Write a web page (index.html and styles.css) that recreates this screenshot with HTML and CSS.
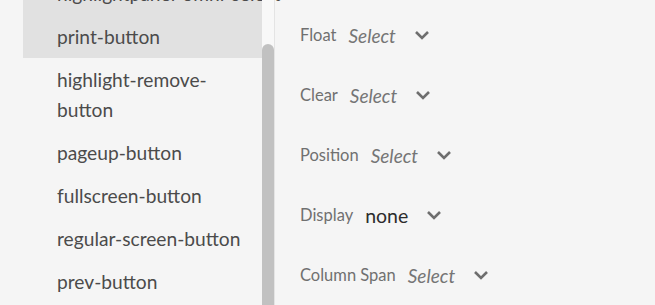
FILE: index.html
```html
<!DOCTYPE html>
<html lang="en">

<head>
    <meta charset="UTF-8">
    <meta name="viewport" content="width=device-width, initial-scale=1.0">
    <title>Component Styles</title>
    <link rel="stylesheet" href="styles.css">
</head>

<body>
    <div class="layout">
        <div class="sidebar">
            <ul class="item-list">
                <li class="item active">highlightpanel-omni-select</li>
                <li class="item active">print-button</li>
                <li class="item">highlight-remove-<br>button</li>
                <li class="item">pageup-button</li>
                <li class="item">fullscreen-button</li>
                <li class="item">regular-screen-button</li>
                <li class="item">prev-button</li>
            </ul>
            <div class="scrollbar">
                <div class="thumb"></div>
            </div>
        </div>

        <div class="props">
            <div class="prop">
                <span class="label">Float</span>
                <span class="value empty">Select</span>
                <svg class="chevron" viewBox="0 0 16 10"><path d="M2 2 L8 8 L14 2" /></svg>
            </div>
            <div class="prop">
                <span class="label">Clear</span>
                <span class="value empty">Select</span>
                <svg class="chevron" viewBox="0 0 16 10"><path d="M2 2 L8 8 L14 2" /></svg>
            </div>
            <div class="prop">
                <span class="label">Position</span>
                <span class="value empty">Select</span>
                <svg class="chevron" viewBox="0 0 16 10"><path d="M2 2 L8 8 L14 2" /></svg>
            </div>
            <div class="prop">
                <span class="label">Display</span>
                <span class="value">none</span>
                <svg class="chevron" viewBox="0 0 16 10"><path d="M2 2 L8 8 L14 2" /></svg>
            </div>
            <div class="prop">
                <span class="label">Column Span</span>
                <span class="value empty">Select</span>
                <svg class="chevron" viewBox="0 0 16 10"><path d="M2 2 L8 8 L14 2" /></svg>
            </div>
        </div>
    </div>
</body>

</html>
```

FILE: styles.css
```css
body {
    font-family: Lato, "Open Sans", sans-serif;
    background-color: #f5f5f5;
    margin: 0;
    height: 305px;
    overflow: hidden;
}

.layout {
    display: flex;
    height: 305px;
    overflow: hidden;
}

.sidebar {
    display: flex;
    flex-shrink: 0;
    width: 275px;
    padding-left: 23px;
    box-sizing: border-box;
    border-right: 1px solid #e4e4e4;
}

.item-list {
    list-style: none;
    margin: -28px 0 0 0;
    padding: 0;
    width: 239px;
}

.item {
    padding: 7px 0 6px 34px;
    line-height: 30px;
    font-size: 19.2px;
    color: #4b4b4b;
    white-space: nowrap;
}

.item.active {
    background-color: #e1e1e1;
}

.scrollbar {
    width: 12px;
    background-color: #f8f8f8;
    padding-top: 44px;
}

.thumb {
    height: 300px;
    background-color: #c1c1c1;
    border-radius: 6px 6px 0 0;
}

.props {
    padding: 5px 0 0 25px;
}

.prop {
    display: flex;
    align-items: center;
    height: 60px;
}

.label {
    font-size: 16.5px;
    color: #707070;
    margin-right: 12px;
}

.value {
    font-size: 19.5px;
    color: #2c2c2c;
    margin-right: 18px;
}

.value.empty {
    font-style: italic;
    color: #757575;
    font-size: 19px;
}

.chevron {
    width: 16px;
    height: 10px;
    fill: none;
    stroke: #6e6e6e;
    stroke-width: 2.6;
}
```
